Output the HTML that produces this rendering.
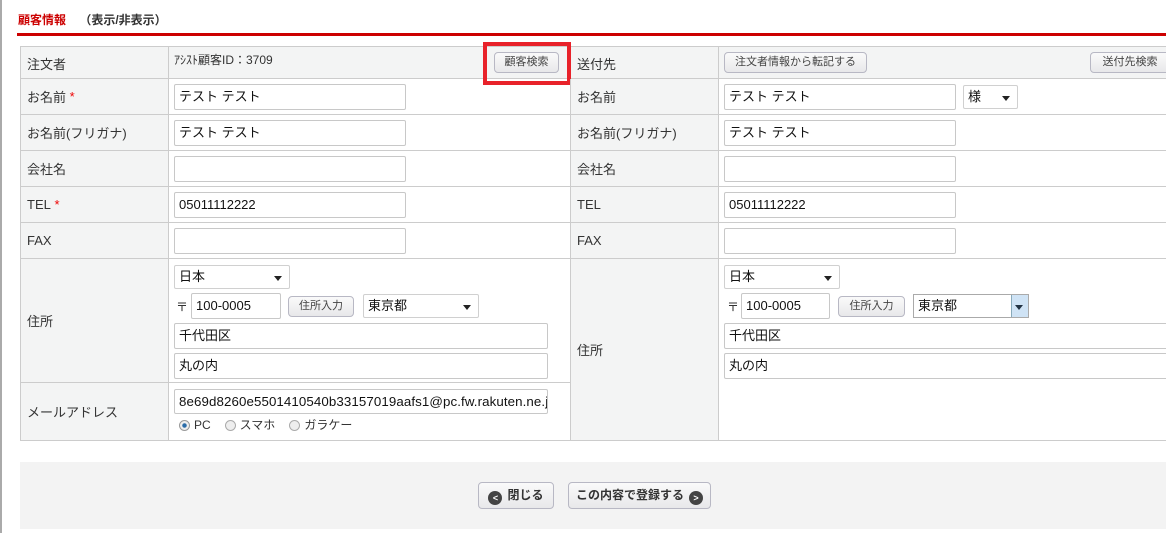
<!DOCTYPE html>
<html><head><meta charset="utf-8"><style>
*{box-sizing:border-box;margin:0;padding:0}
body{width:1166px;height:533px;background:#fff;position:relative;overflow:hidden;font-family:"Liberation Sans","Noto Sans CJK JP",sans-serif;font-size:13px;color:#333}
.a{position:absolute}
.lab{position:absolute;background:#f3f4f4;border-right:1px solid #ccc;border-bottom:1px solid #ccc;padding-left:6px;display:flex;align-items:center;color:#333}
.val{position:absolute;border-bottom:1px solid #ccc;border-right:1px solid #ccc}
.in{position:absolute;border:1px solid #c8c8c8;border-radius:2px;background:#fff;height:26px;padding-left:4px;line-height:24px;color:#111;font-size:13px;white-space:nowrap;overflow:hidden}
.sel{position:absolute;border:1px solid #d0d0d0;border-radius:2px;background:#fff;height:24px;padding-left:4px;line-height:22px;color:#111}
.sel:after{content:"";position:absolute;right:7px;top:10px;border:4px solid transparent;border-top:5px solid #222;border-bottom:0}
.btn{position:absolute;border:1px solid #b8b8c4;border-radius:4px;background:linear-gradient(#fafafa,#e8e8ea);font-size:11px;color:#444;text-align:center;height:21px;line-height:19px}
.req{color:#e00}
</style></head><body>
<div class="a" style="left:0;top:0;width:2px;height:533px;background:#aaa"></div>
<div class="a" style="left:18px;top:11px;font-size:12px;font-weight:bold;color:#c00">顧客情報 <span style="color:#333;margin-left:10px">（表示/非表示）</span></div>
<div class="a" style="left:17px;top:33px;width:1149px;height:3px;background:#c00"></div>

<div class="a" style="left:20px;top:46px;width:1146px;height:395px;border-top:1px solid #ccc;border-left:1px solid #ccc"></div>
<div class="lab" style="left:21px;top:47px;width:148px;height:32px;align-items:flex-start;padding-top:7px">注文者</div>
<div class="val" style="left:169px;top:47px;width:402px;height:32px;background:#f3f4f4"></div>
<div class="a" style="left:174px;top:51px;font-size:12px;color:#333">ｱｼｽﾄ顧客ID：3709</div>
<div class="btn" style="left:494px;top:52px;width:65px">顧客検索</div>
<div class="a" style="left:483px;top:42px;width:88px;height:43px;border:4px solid #e8222a"></div>
<div class="lab" style="left:571px;top:47px;width:148px;height:32px;align-items:flex-start;padding-top:7px">送付先</div>
<div class="val" style="left:719px;top:47px;width:447px;height:32px;background:#f3f4f4;border-right:0"></div>
<div class="btn" style="left:724px;top:52px;width:143px">注文者情報から転記する</div>
<div class="btn" style="left:1090px;top:52px;width:80px">送付先検索</div>

<div class="lab" style="left:21px;top:79px;width:148px;height:36px">お名前&nbsp;<span class="req">*</span></div>
<div class="val" style="left:169px;top:79px;width:402px;height:36px"></div>
<div class="in" style="left:174px;top:84px;width:232px">テスト テスト</div>
<div class="lab" style="left:571px;top:79px;width:148px;height:36px">お名前</div>
<div class="val" style="left:719px;top:79px;width:447px;height:36px;border-right:0"></div>
<div class="in" style="left:724px;top:84px;width:232px">テスト テスト</div>
<div class="sel" style="left:963px;top:85px;width:55px">様</div>

<div class="lab" style="left:21px;top:115px;width:148px;height:36px">お名前(フリガナ)</div>
<div class="val" style="left:169px;top:115px;width:402px;height:36px"></div>
<div class="in" style="left:174px;top:120px;width:232px">テスト テスト</div>
<div class="lab" style="left:571px;top:115px;width:148px;height:36px">お名前(フリガナ)</div>
<div class="val" style="left:719px;top:115px;width:447px;height:36px;border-right:0"></div>
<div class="in" style="left:724px;top:120px;width:232px">テスト テスト</div>

<div class="lab" style="left:21px;top:151px;width:148px;height:36px">会社名</div>
<div class="val" style="left:169px;top:151px;width:402px;height:36px"></div>
<div class="in" style="left:174px;top:156px;width:232px"></div>
<div class="lab" style="left:571px;top:151px;width:148px;height:36px">会社名</div>
<div class="val" style="left:719px;top:151px;width:447px;height:36px;border-right:0"></div>
<div class="in" style="left:724px;top:156px;width:232px"></div>

<div class="lab" style="left:21px;top:187px;width:148px;height:36px">TEL&nbsp;<span class="req">*</span></div>
<div class="val" style="left:169px;top:187px;width:402px;height:36px"></div>
<div class="in" style="left:174px;top:192px;width:232px">05011112222</div>
<div class="lab" style="left:571px;top:187px;width:148px;height:36px">TEL</div>
<div class="val" style="left:719px;top:187px;width:447px;height:36px;border-right:0"></div>
<div class="in" style="left:724px;top:192px;width:232px">05011112222</div>

<div class="lab" style="left:21px;top:223px;width:148px;height:36px">FAX</div>
<div class="val" style="left:169px;top:223px;width:402px;height:36px"></div>
<div class="in" style="left:174px;top:228px;width:232px"></div>
<div class="lab" style="left:571px;top:223px;width:148px;height:36px">FAX</div>
<div class="val" style="left:719px;top:223px;width:447px;height:36px;border-right:0"></div>
<div class="in" style="left:724px;top:228px;width:232px"></div>

<div class="lab" style="left:21px;top:259px;width:148px;height:124px">住所</div>
<div class="val" style="left:169px;top:259px;width:402px;height:124px"></div>
<div class="sel" style="left:174px;top:265px;width:116px">日本</div>
<div class="a" style="left:176px;top:298px;font-size:12px">〒</div>
<div class="in" style="left:191px;top:293px;width:90px">100-0005</div>
<div class="btn" style="left:288px;top:296px;width:66px">住所入力</div>
<div class="sel" style="left:363px;top:294px;width:116px">東京都</div>
<div class="in" style="left:174px;top:323px;width:374px">千代田区</div>
<div class="in" style="left:174px;top:353px;width:374px">丸の内</div>
<div class="lab" style="left:21px;top:383px;width:148px;height:58px">メールアドレス</div>
<div class="val" style="left:169px;top:383px;width:402px;height:58px"></div>
<div class="in" style="left:174px;top:389px;width:374px;height:25px;line-height:23px;font-size:13.3px;letter-spacing:0.1px">8e69d8260e5501410540b33157019aafs1@pc.fw.rakuten.ne.jp</div>
<div class="a" style="left:179px;top:418px;font-size:12px;line-height:14px;display:flex;align-items:center;gap:4px">
<span style="width:11px;height:11px;border-radius:50%;border:1px solid #999;background:radial-gradient(#2b6ca8 30%,#eee 40%)"></span>PC
<span style="margin-left:10px;width:11px;height:11px;border-radius:50%;border:1px solid #aaa;background:#eee"></span>スマホ
<span style="margin-left:10px;width:11px;height:11px;border-radius:50%;border:1px solid #aaa;background:#eee"></span>ガラケー</div>

<div class="lab" style="left:571px;top:259px;width:148px;height:182px">住所</div>
<div class="val" style="left:719px;top:259px;width:447px;height:182px;border-right:0"></div>
<div class="sel" style="left:724px;top:265px;width:116px">日本</div>
<div class="a" style="left:727px;top:298px;font-size:12px">〒</div>
<div class="in" style="left:741px;top:293px;width:89px">100-0005</div>
<div class="btn" style="left:838px;top:296px;width:67px">住所入力</div>
<div class="a" style="left:913px;top:294px;width:116px;height:24px;border:1px solid #aaa;background:#fff;padding-left:4px;line-height:22px;color:#111">東京都<span style="position:absolute;right:0;top:0;width:17px;height:22px;background:#cfe3f5;border-left:1px solid #8ab"></span><span style="position:absolute;right:5px;top:10px;border:4px solid transparent;border-top:5px solid #234;border-bottom:0"></span></div>
<div class="in" style="left:724px;top:323px;width:450px">千代田区</div>
<div class="in" style="left:724px;top:353px;width:450px">丸の内</div>

<div class="a" style="left:20px;top:462px;width:1146px;height:67px;background:#f3f3f3"></div>
<div class="btn" style="left:478px;top:482px;width:76px;height:27px;line-height:25px;font-size:12px;font-weight:bold;color:#333"><span style="display:inline-block;width:14px;height:14px;border-radius:50%;background:#444;color:#fff;font-size:9px;line-height:14px;vertical-align:-2px;margin-right:5px">&lt;</span>閉じる</div>
<div class="btn" style="left:568px;top:482px;width:143px;height:27px;line-height:25px;font-size:12px;font-weight:bold;color:#333">この内容で登録する<span style="display:inline-block;width:14px;height:14px;border-radius:50%;background:#444;color:#fff;font-size:9px;line-height:14px;vertical-align:-2px;margin-left:5px">&gt;</span></div>
</body></html>
